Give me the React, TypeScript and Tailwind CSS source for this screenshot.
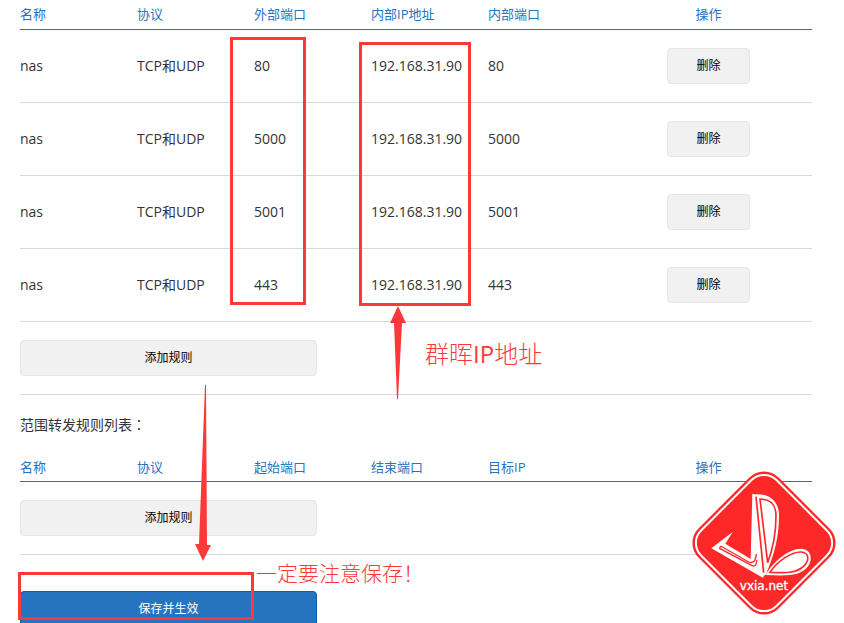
import React from "react";

const rules = [
  { name: "nas", protocol: "TCP和UDP", external: "80", ip: "192.168.31.90", internal: "80" },
  { name: "nas", protocol: "TCP和UDP", external: "5000", ip: "192.168.31.90", internal: "5000" },
  { name: "nas", protocol: "TCP和UDP", external: "5001", ip: "192.168.31.90", internal: "5001" },
  { name: "nas", protocol: "TCP和UDP", external: "443", ip: "192.168.31.90", internal: "443" },
];

function RuleTable({ headings, children }: { headings: string[]; children?: React.ReactNode }) {
  return (
    <table className="w-full table-fixed border-collapse text-left text-sm text-[#333]">
      <colgroup>
        <col className="w-[117px]" />
        <col className="w-[117px]" />
        <col className="w-[117px]" />
        <col className="w-[117px]" />
        <col className="w-[117px]" />
        <col />
      </colgroup>
      <thead>
        <tr className="h-[29px] border-b border-[#2673bf] text-[13px] leading-5 text-[#2673bf]">
          {headings.map((h) => (
            <th key={h} scope="col" className="p-0 font-normal last:text-center">
              {h}
            </th>
          ))}
        </tr>
      </thead>
      {children}
    </table>
  );
}

function AddRule() {
  return (
    <div className="flex h-[73px] items-center border-b border-[#d9d9d9]">
      <button type="button" className="h-9 w-[297px] rounded border border-[#e6e6e6] bg-[#f1f1f1] text-xs text-black">
        添加规则
      </button>
    </div>
  );
}

function Logo() {
  return (
    <svg viewBox="0 0 492 489" className="absolute top-[460px] left-[680px] h-[163px] w-[164px]" role="img" aria-label="vxia.net">
      <rect x="82" y="79" width="340" height="340" rx="62" fill="#ff2828" transform="rotate(45 252 249)" />
      <rect x="92" y="89" width="320" height="320" rx="53" fill="none" stroke="#fff" strokeWidth="6" transform="rotate(45 252 249)" />
      <path d="M158 216L94 265L250 354L229 104L217 101L212 297L136 251Z" fill="#fff" />
      <path d="M227 103C268 100 297 125 297 165C297 225 285 280 258 342L250 350Z" fill="#fff" />
      <path d="M240 117C274 118 288 134 288 168C288 220 279 265 263 308Z" fill="none" stroke="#ff2828" strokeWidth="5" />
      <path d="M228 110L251 338" fill="none" stroke="#ff2828" strokeWidth="5" />
      <path d="M122 258L206 306Q226 314 229 282M230 300Q230 322 216 317L119 265L122 258" fill="none" stroke="#ff2828" strokeWidth="4" />
      <path d="M256 345C280 305 325 265 366 266C392 268 400 296 384 319C362 350 315 348 256 345Z" fill="#fff" />
      <path d="M270 337C292 304 334 275 363 276C387 278 389 300 373 317C350 341 314 339 270 337Z" fill="none" stroke="#ff2828" strokeWidth="5" />
      <text x="252" y="389" textAnchor="middle" fill="#fff" stroke="#fff" strokeWidth="1" fontSize="36" fontFamily="'DejaVu Sans', sans-serif">
        vxia.net
      </text>
    </svg>
  );
}

export default function App() {
  return (
    <main className="relative h-screen overflow-hidden bg-white pr-8 pl-5 font-['Open_Sans','Noto_Sans_CJK_SC',sans-serif]">
      <RuleTable headings={["名称", "协议", "外部端口", "内部IP地址", "内部端口", "操作"]}>
        <tbody>
          {rules.map((r) => (
            <tr key={r.external} className="h-[73px] border-b border-[#d9d9d9]">
              <td className="p-0">{r.name}</td>
              <td className="p-0">{r.protocol}</td>
              <td className="p-0">{r.external}</td>
              <td className="p-0">{r.ip}</td>
              <td className="p-0">{r.internal}</td>
              <td className="p-0 text-center">
                <button type="button" className="h-9 w-[83px] rounded border border-[#e6e6e6] bg-[#f1f1f1] text-xs text-black">
                  删除
                </button>
              </td>
            </tr>
          ))}
        </tbody>
      </RuleTable>
      <AddRule />
      <h2 lang="zh-Hant" className="flex h-[58px] items-center font-['Noto_Sans_CJK_TC',sans-serif] text-sm text-[#333]">
        范围转发规则列表：
      </h2>
      <RuleTable headings={["名称", "协议", "起始端口", "结束端口", "目标IP", "操作"]} />
      <AddRule />
      <button type="button" className="mt-9 h-9 w-[297px] rounded border border-[#0f5ba6] bg-[#2673bf] text-xs text-white">
        保存并生效
      </button>

      <div className="absolute top-[37px] left-[230px] h-[268px] w-[76px] border-3 border-[#fc3939]" />
      <div className="absolute top-[42px] left-[359px] h-[264px] w-[112px] border-3 border-[#fc3939]" />
      <div className="absolute top-[572px] left-[18px] h-[48px] w-[236px] border-3 border-[#fc3939]" />
      <svg viewBox="0 0 16 94" className="absolute top-[306px] left-[390px] h-[94px] w-4" fill="#fc3939" aria-hidden="true">
        <path d="M8 0L16 17L12 17L8 93L7 93L4 17L0 17Z" />
      </svg>
      <svg viewBox="0 0 16 176" className="absolute top-[385px] left-[195px] h-[176px] w-4" fill="#fc3939" aria-hidden="true">
        <path d="M10 0L11 0L12 160L16 160L8 176L0 159L4 159Z" />
      </svg>
      <p className="absolute top-[336px] left-[425px] text-2xl leading-9 font-light whitespace-nowrap text-[#fc3939]">
        群晖<span className="font-normal">IP</span>地址
      </p>
      <p className="absolute top-[557px] left-[256px] text-[21px] leading-8 font-light whitespace-nowrap text-[#fc3939]">一定要注意保存！</p>
      <Logo />
    </main>
  );
}
